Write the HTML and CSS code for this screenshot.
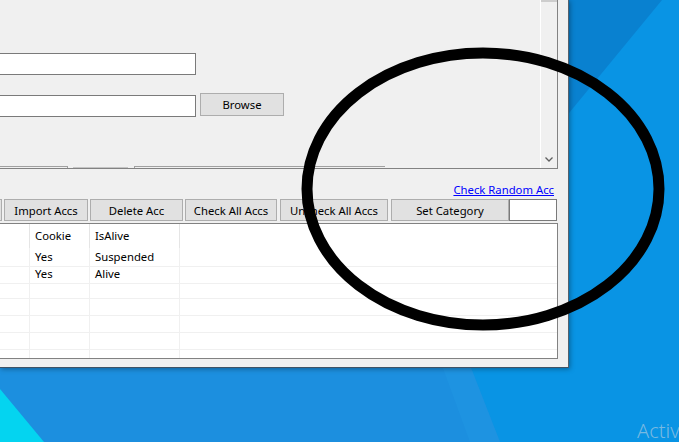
FILE: index.html
```html
<!DOCTYPE html>
<html lang="en">
<head>
<meta charset="UTF-8" />
<title>Account Manager</title>
<link rel="stylesheet" href="styles.css">
</head>
<body>

<div class="desktop">
  <!-- wallpaper -->
  <svg class="wallpaper" viewBox="0 0 679 442" xmlns="http://www.w3.org/2000/svg">
    <rect width="679" height="442" fill="#0994e4"/>
    <polygon points="560,0 662,0 560,124" fill="#0981d0"/>
    <polygon points="0,360 468,360 500,442 0,442" fill="#1c8fdf"/>
    <polygon points="440,360 468,360 500,442 470,442" fill="#1f98e4" opacity="0.5"/>
    <polygon points="0,389 44,442 0,442" fill="#04d4f0"/>
    <text x="637" y="438" class="watermark" font-family="Noto Sans, sans-serif">Activate Windows</text>
  </svg>

  <div class="window">
    <div class="panel">
      <div class="panel-body">
        <input type="text" class="textbox path" />
        <div class="field-row">
          <input type="text" class="textbox path" />
          <button class="btn browse">Browse</button>
        </div>
        <div class="stubs">
          <span class="stub stub-a"></span>
          <span class="stub stub-b"></span>
          <span class="stub stub-c"></span>
        </div>
      </div>
      <div class="vscroll">
        <div class="thumb"></div>
        <svg class="arrow" viewBox="0 0 8 5" width="8" height="5">
          <path d="M0.5 0.5 L4 4 L7.5 0.5" fill="none" stroke="#606060" stroke-width="1.3"/>
        </svg>
      </div>
    </div>

    <div class="link-row">
      <a href="#" class="link">Check Random Acc</a>
    </div>

    <div class="toolbar">
      <button class="btn w-cut"></button>
      <button class="btn w-import">Import Accs</button>
      <button class="btn w-delete">Delete Acc</button>
      <button class="btn w-check">Check All Accs</button>
      <button class="btn w-uncheck">Uncheck All Accs</button>
      <button class="btn w-category">Set Category</button>
      <input type="text" class="textbox category" />
    </div>

    <div class="listview">
      <div class="lv-head">
        <div class="cell"></div>
        <div class="cell">Cookie</div>
        <div class="cell">IsAlive</div>
        <div class="cell last"></div>
      </div>
      <div class="lv-row">
        <div class="cell"></div><div class="cell">Yes</div><div class="cell">Suspended</div><div class="cell last"></div>
      </div>
      <div class="lv-row">
        <div class="cell"></div><div class="cell">Yes</div><div class="cell">Alive</div><div class="cell last"></div>
      </div>
      <div class="lv-row">
        <div class="cell"></div><div class="cell"></div><div class="cell"></div><div class="cell last"></div>
      </div>
      <div class="lv-row">
        <div class="cell"></div><div class="cell"></div><div class="cell"></div><div class="cell last"></div>
      </div>
      <div class="lv-row">
        <div class="cell"></div><div class="cell"></div><div class="cell"></div><div class="cell last"></div>
      </div>
      <div class="lv-row">
        <div class="cell"></div><div class="cell"></div><div class="cell"></div><div class="cell last"></div>
      </div>
      <div class="lv-row">
        <div class="cell"></div><div class="cell"></div><div class="cell"></div><div class="cell last"></div>
      </div>
    </div>
  </div>

  <!-- pen mark over the screen -->
  <svg class="marker" viewBox="0 0 679 442" xmlns="http://www.w3.org/2000/svg">
    <ellipse cx="483" cy="189" rx="176" ry="136" fill="none" stroke="#000" stroke-width="11"/>
  </svg>
</div>

</body>
</html>
```

FILE: styles.css
```css
body {
  margin: 0;
  background: #0994e4;
  font-family: 'Noto Sans', sans-serif;
  font-size: 11.3px;
  color: #000;
}
.desktop {
  width: 679px;
  height: 442px;
  display: grid;
  overflow: hidden;
}
.desktop > * {
  grid-area: 1 / 1;
}
.wallpaper, .marker {
  width: 679px;
  height: 442px;
  display: block;
}
.marker {
  pointer-events: none;
}
.watermark {
  font-size: 20px;
  font-weight: 300;
  fill: #c4d3e0;
  fill-opacity: 0.6;
}

/* the form window */
.window {
  justify-self: start;
  align-self: start;
  width: 569px;
  height: 368px;
  box-sizing: border-box;
  background: #f0f0f0;
  border-right: 1px solid #55616d;
  border-bottom: 1px solid #3f5366;
  box-shadow: 1px 1px 5px rgba(0,0,0,0.35);
}

.panel {
  display: flex;
  width: 558px;
  height: 169px;
  box-sizing: border-box;
  border-right: 1px solid #828282;
  border-bottom: 1px solid #828282;
}
.panel-body {
  flex: 1;
  display: flex;
  flex-direction: column;
  padding-top: 53px;
}
.field-row {
  display: flex;
  align-items: flex-start;
  margin-top: 18px;
}
.field-row .textbox {
  margin-top: 2px;
}
.textbox {
  box-sizing: border-box;
  height: 22px;
  margin: 0;
  padding: 0 3px;
  background: #fff;
  border: 1px solid #7a7a7a;
  border-radius: 0;
  font: inherit;
  outline: none;
}
.textbox.path {
  width: 196px;
  border-left: none;
}
.btn {
  box-sizing: border-box;
  height: 22px;
  margin: 0;
  padding: 0;
  background: #e1e1e1;
  border: 1px solid #adadad;
  border-radius: 0;
  font: inherit;
  color: #000;
  text-align: center;
}
.browse {
  width: 84px;
  height: 23px;
  margin-left: 4px;
}
.stubs {
  margin-top: auto;
  display: flex;
  height: 2px;
}
.stub {
  box-sizing: border-box;
  height: 2px;
}
.stub-a {
  width: 68px;
  border-top: 1px solid #a0a0a0;
  border-right: 1px solid #a0a0a0;
}
.stub-b {
  width: 55px;
  margin-left: 5px;
  margin-top: 1px;
  height: 1px;
  border-top: 1px solid #c4c4c4;
}
.stub-c {
  width: 251px;
  margin-left: 6px;
  border-top: 1px solid #a0a0a0;
  border-left: 1px solid #a0a0a0;
}
.vscroll {
  width: 17px;
  box-sizing: border-box;
  border-left: 1px solid #fff;
  display: flex;
  flex-direction: column;
  align-items: center;
}
.thumb {
  align-self: stretch;
  height: 2px;
  background: #cdcdcd;
}
.arrow {
  margin-top: auto;
  margin-bottom: 6px;
}

.link-row {
  width: 558px;
  height: 30px;
  box-sizing: border-box;
  padding: 13px 4px 0 0;
  text-align: right;
  line-height: 15px;
}
.link {
  color: #0000ff;
  text-decoration: underline;
}

.toolbar {
  display: flex;
  height: 22px;
}
.w-cut { width: 2px; border-left: none; }
.w-import { width: 84px; margin-left: 2px; }
.w-delete { width: 93px; margin-left: 2px; }
.w-check { width: 92px; margin-left: 2px; }
.w-uncheck { width: 108px; margin-left: 3px; }
.w-category { width: 118px; margin-left: 3px; }
.textbox.category {
  width: 48px;
}

.listview {
  margin-top: 2px;
  width: 558px;
  height: 136px;
  box-sizing: border-box;
  background: #fff;
  border: 1px solid #828282;
  border-left: none;
  overflow: hidden;
}
.lv-head, .lv-row {
  display: grid;
  grid-template-columns: 30px 60px 90px 1fr;
}
.lv-head {
  height: 24px;
  line-height: 23px;
}
.lv-row {
  height: 17px;
  line-height: 18px;
}
.cell {
  box-sizing: border-box;
  padding-left: 5px;
  white-space: nowrap;
}
.lv-head .cell {
  border-right: 1px solid #e5e5e5;
}
.lv-row .cell {
  border-right: 1px solid #f0f0f0;
  border-bottom: 1px solid #f0f0f0;
}
.cell.last {
  border-right: none;
}
```
